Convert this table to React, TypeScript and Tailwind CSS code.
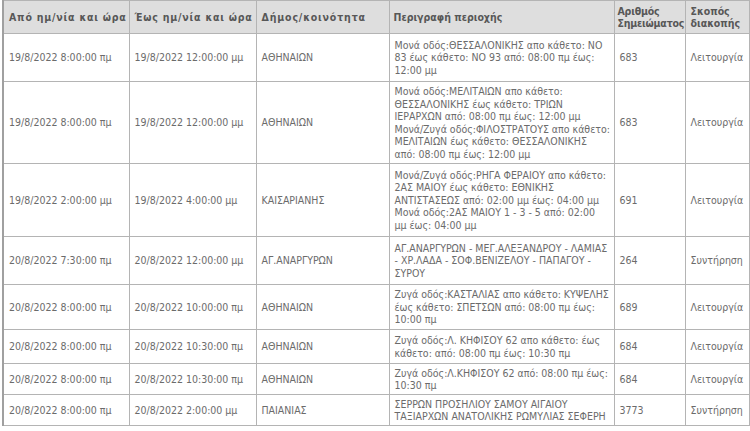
import React from "react";

type Row = {
  from: string;
  to: string;
  dim: string;
  desc: string[];
  num: string;
  purpose: string;
  h: string;
};

const rows: Row[] = [
  {
    from: "19/8/2022 8:00:00 πμ",
    to: "19/8/2022 12:00:00 μμ",
    dim: "ΑΘΗΝΑΙΩΝ",
    desc: [
      "Μονά οδός:ΘΕΣΣΑΛΟΝΙΚΗΣ απο κάθετο: ΝΟ",
      "83 έως κάθετο: ΝΟ 93 από: 08:00 πμ έως:",
      "12:00 μμ",
    ],
    num: "683",
    purpose: "Λειτουργία",
    h: "h-[48px]",
  },
  {
    from: "19/8/2022 8:00:00 πμ",
    to: "19/8/2022 12:00:00 μμ",
    dim: "ΑΘΗΝΑΙΩΝ",
    desc: [
      "Μονά οδός:ΜΕΛΙΤΑΙΩΝ απο κάθετο:",
      "ΘΕΣΣΑΛΟΝΙΚΗΣ έως κάθετο: ΤΡΙΩΝ",
      "ΙΕΡΑΡΧΩΝ από: 08:00 πμ έως: 12:00 μμ",
      "Μονά/Ζυγά οδός:ΦΙΛΟΣΤΡΑΤΟΥΣ απο κάθετο:",
      "ΜΕΛΙΤΑΙΩΝ έως κάθετο: ΘΕΣΣΑΛΟΝΙΚΗΣ",
      "από: 08:00 πμ έως: 12:00 μμ",
    ],
    num: "683",
    purpose: "Λειτουργία",
    h: "h-[82px]",
  },
  {
    from: "19/8/2022 2:00:00 μμ",
    to: "19/8/2022 4:00:00 μμ",
    dim: "ΚΑΙΣΑΡΙΑΝΗΣ",
    desc: [
      "Μονά/Ζυγά οδός:ΡΗΓΑ ΦΕΡΑΙΟΥ απο κάθετο:",
      "2ΑΣ ΜΑΙΟΥ έως κάθετο: ΕΘΝΙΚΗΣ",
      "ΑΝΤΙΣΤΑΣΕΩΣ από: 02:00 μμ έως: 04:00 μμ",
      "Μονά οδός:2ΑΣ ΜΑΙΟΥ 1 - 3 - 5 από: 02:00",
      "μμ έως: 04:00 μμ",
    ],
    num: "691",
    purpose: "Λειτουργία",
    h: "h-[73px]",
  },
  {
    from: "20/8/2022 7:30:00 πμ",
    to: "20/8/2022 12:00:00 μμ",
    dim: "ΑΓ.ΑΝΑΡΓΥΡΩΝ",
    desc: [
      "ΑΓ.ΑΝΑΡΓΥΡΩΝ - ΜΕΓ.ΑΛΕΞΑΝΔΡΟΥ - ΛΑΜΙΑΣ",
      "- ΧΡ.ΛΑΔΑ - ΣΟΦ.ΒΕΝΙΖΕΛΟΥ - ΠΑΠΑΓΟΥ -",
      "ΣΥΡΟΥ",
    ],
    num: "264",
    purpose: "Συντήρηση",
    h: "h-[48px]",
  },
  {
    from: "20/8/2022 8:00:00 πμ",
    to: "20/8/2022 10:00:00 πμ",
    dim: "ΑΘΗΝΑΙΩΝ",
    desc: [
      "Ζυγά οδός:ΚΑΣΤΑΛΙΑΣ απο κάθετο: ΚΥΨΕΛΗΣ",
      "έως κάθετο: ΣΠΕΤΣΩΝ από: 08:00 πμ έως:",
      "10:00 πμ",
    ],
    num: "689",
    purpose: "Λειτουργία",
    h: "h-[45px]",
  },
  {
    from: "20/8/2022 8:00:00 πμ",
    to: "20/8/2022 10:30:00 πμ",
    dim: "ΑΘΗΝΑΙΩΝ",
    desc: [
      "Ζυγά οδός:Λ. ΚΗΦΙΣΟΥ 62 απο κάθετο: έως",
      "κάθετο: από: 08:00 πμ έως: 10:30 πμ",
    ],
    num: "684",
    purpose: "Λειτουργία",
    h: "h-[34px]",
  },
  {
    from: "20/8/2022 8:00:00 πμ",
    to: "20/8/2022 10:30:00 πμ",
    dim: "ΑΘΗΝΑΙΩΝ",
    desc: ["Ζυγά οδός:Λ.ΚΗΦΙΣΟΥ 62 από: 08:00 πμ έως:", "10:30 πμ"],
    num: "684",
    purpose: "Λειτουργία",
    h: "h-[31px]",
  },
  {
    from: "20/8/2022 8:00:00 πμ",
    to: "20/8/2022 2:00:00 μμ",
    dim: "ΠΑΙΑΝΙΑΣ",
    desc: [
      "ΣΕΡΡΩΝ ΠΡΟΣΗΛΙΟΥ ΣΑΜΟΥ ΑΙΓΑΙΟΥ",
      "ΤΑΞΙΑΡΧΩΝ ΑΝΑΤΟΛΙΚΗΣ ΡΩΜΥΛΙΑΣ ΣΕΦΕΡΗ",
    ],
    num: "3773",
    purpose: "Συντήρηση",
    h: "h-[31px]",
  },
];

const td =
  "border border-[#b4b4b4] px-[5px] py-0 align-middle whitespace-nowrap overflow-hidden";
const th =
  "border border-[#b4b4b4] py-0 align-middle text-left font-bold whitespace-nowrap overflow-hidden";

export default function App() {
  return (
    <div
      className="w-[750px] h-[431px] bg-white overflow-hidden pl-[2px]"
      style={{ fontFamily: "'DejaVu Sans Condensed', 'DejaVu Sans', sans-serif" }}
    >
      <table className="table-fixed border-collapse w-[746px] text-[10.5px] leading-[12.5px] text-[#6b6b6b] border-l-2 border-l-[#a0a0a0]">
        <colgroup>
          <col className="w-[126px]" />
          <col className="w-[127px]" />
          <col className="w-[133px]" />
          <col className="w-[225px]" />
          <col className="w-[71px]" />
          <col className="w-[64px]" />
        </colgroup>
        <thead>
          <tr className="h-[33px] bg-[#dedede] text-[#575757]">
            <th className={th + " px-[5px] tracking-[0.8px]"}>Από ημ/νία και ώρα</th>
            <th className={th + " px-[5px] tracking-[0.8px]"}>Έως ημ/νία και ώρα</th>
            <th className={th + " px-[5px] tracking-[0.85px]"}>Δήμος/κοινότητα</th>
            <th className={th + " px-[4px]"}>Περιγραφή περιοχής</th>
            <th className={th + " px-[3px] leading-[12px] tracking-[-0.2px]"}>
              Αριθμός
              <br />
              Σημειώματος
            </th>
            <th className={th + " px-[5px] leading-[12px]"}>
              Σκοπός
              <br />
              διακοπής
            </th>
          </tr>
        </thead>
        <tbody>
          {rows.map((r, i) => (
            <tr key={i} className={r.h}>
              <td className={td}>{r.from}</td>
              <td className={td}>{r.to}</td>
              <td className={td}>{r.dim}</td>
              <td className={td + " px-[4px]"}>
                {r.desc.map((l, j) => (
                  <div key={j}>{l}</div>
                ))}
              </td>
              <td className={td}>{r.num}</td>
              <td className={td}>{r.purpose}</td>
            </tr>
          ))}
        </tbody>
      </table>
    </div>
  );
}
